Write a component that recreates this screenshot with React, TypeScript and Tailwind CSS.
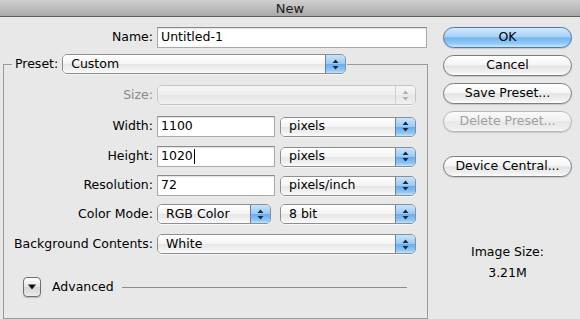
import React from "react";

const font = { fontFamily: '"DejaVu Sans", "Liberation Sans", sans-serif' };

function Arrows({ disabled }: { disabled?: boolean }) {
  const c = disabled ? "#b0b0b0" : "#1a2a40";
  return (
    <svg width="7" height="11" viewBox="0 0 7 11">
      <path d="M3.5 0.5 L6.5 4 L0.5 4 Z" fill={c} />
      <path d="M0.5 7 L6.5 7 L3.5 10.5 Z" fill={c} />
    </svg>
  );
}

function Select({
  value,
  width,
  disabled,
  className,
}: {
  value: string;
  width: string;
  disabled?: boolean;
  className?: string;
}) {
  return (
    <div
      className={`${width} h-[20px] flex rounded-[5px] border ${
        disabled ? "border-[#c4c4c4]" : "border-[#8e8e8e]"
      } overflow-hidden shadow-[0_1px_0_rgba(255,255,255,0.6)] ${className ?? ""}`}
    >
      <div
        className={`flex-1 flex items-center pl-[8px] text-[12.5px] leading-none ${
          disabled
            ? "bg-[linear-gradient(#f6f6f6,#eeeeee_50%,#e6e6e6_51%,#f0f0f0)] text-[#999]"
            : "bg-[linear-gradient(#ffffff,#f4f4f4_48%,#e6e6e6_52%,#f3f3f3_85%,#fbfbfb)] text-black"
        }`}
      >
        {value}
      </div>
      <div
        className={`w-[20px] flex items-center justify-center border-l ${
          disabled
            ? "border-[#d0d0d0] bg-[linear-gradient(#f6f6f6,#eeeeee_50%,#e6e6e6_51%,#f0f0f0)]"
            : "border-[#5d86b8] bg-[linear-gradient(#c9e3fb,#9ccaf3_48%,#6aaded_52%,#8fc6f5_85%,#c5e4fc)]"
        }`}
      >
        <Arrows disabled={disabled} />
      </div>
    </div>
  );
}

function Input({ value, width, caret }: { value: string; width: string; caret?: boolean }) {
  return (
    <div
      className={`${width} h-[21px] bg-white border border-[#a9a9a9] border-t-[#8a8a8a] shadow-[inset_0_1px_1px_rgba(0,0,0,0.12)] flex items-center pl-[3px] text-[12.5px] leading-none text-black`}
    >
      {value}
      {caret && <span className="inline-block w-[1px] h-[15px] bg-black ml-[1px]" />}
    </div>
  );
}

function Button({
  label,
  primary,
  disabled,
  className,
}: {
  label: string;
  primary?: boolean;
  disabled?: boolean;
  className?: string;
}) {
  return (
    <div
      className={`w-[129px] h-[21px] rounded-full border flex items-center justify-center text-[12.5px] leading-none ${
        primary
          ? "border-[#4f76a6] bg-[linear-gradient(#d2e9fc,#a8d2f7_45%,#74b6ef_52%,#8ec7f5_80%,#c9e8fd)] text-black"
          : disabled
          ? "border-[#b8b8b8] bg-[linear-gradient(#fafafa,#f0f0f0_48%,#e6e6e6_52%,#eeeeee_85%,#f6f6f6)] text-[#a0a0a0]"
          : "border-[#7d7d7d] bg-[linear-gradient(#ffffff,#f5f5f5_45%,#e4e4e4_52%,#f0f0f0_85%,#ffffff)] text-black"
      } shadow-[0_1px_1px_rgba(0,0,0,0.15)] ${className ?? ""}`}
    >
      {label}
    </div>
  );
}

function Row({
  label,
  children,
  className,
  muted,
}: {
  label: string;
  children: React.ReactNode;
  className?: string;
  muted?: boolean;
}) {
  return (
    <div className={`flex items-center ${className ?? ""}`}>
      <div
        className={`w-[149px] text-right pr-0 text-[12.5px] leading-none ${
          muted ? "text-[#8a8a8a]" : "text-black"
        }`}
      >
        {label}
      </div>
      <div className="ml-[4px] flex items-center gap-[5px]">{children}</div>
    </div>
  );
}

export default function App() {
  return (
    <div
      className="w-[580px] h-[319px] bg-[#e8e8e8] overflow-hidden flex flex-col"
      style={font}
    >
      <div className="h-[17px] shrink-0 bg-[linear-gradient(#d0d0d0,#a9a9a9)] border-b border-[#5e5e5e] flex items-center justify-center text-[13px] leading-none text-[#1a1a1a]">
        New
      </div>
      <div className="flex">
        <div className="w-[428px]">
          <div className="flex items-center mt-[10px]">
            <div className="w-[153px] text-right text-[12.5px] leading-none text-black">Name:</div>
            <div className="ml-[4px]">
              <Input value="Untitled-1" width="w-[270px]" />
            </div>
          </div>
          <fieldset className="ml-[3px] mt-[6px] w-[425px] border border-[#9a9a9a] pl-[8px] pb-[21px]">
            <legend className="flex items-center pl-[3px] pr-[1px]">
              <span className="text-[12.5px] leading-none text-black mr-[4px]">Preset:</span>
              <Select value="Custom" width="w-[284px]" />
            </legend>
            <div className="-ml-[8px]">
              <Row label="Size:" muted className="mt-[11px]">
                <Select value="" width="w-[259px]" disabled />
              </Row>
              <Row label="Width:" className="mt-[11px]">
                <Input value="1100" width="w-[118px]" />
                <Select value="pixels" width="w-[136px]" />
              </Row>
              <Row label="Height:" className="mt-[9px]">
                <Input value="1020" width="w-[118px]" caret />
                <Select value="pixels" width="w-[136px]" />
              </Row>
              <Row label="Resolution:" className="mt-[8px]">
                <Input value="72" width="w-[118px]" />
                <Select value="pixels/inch" width="w-[136px]" />
              </Row>
              <Row label="Color Mode:" className="mt-[8px]">
                <Select value="RGB Color" width="w-[114px]" />
                <Select value="8 bit" width="w-[136px]" className="ml-[4px]" />
              </Row>
              <Row label="Background Contents:" className="mt-[10px]">
                <Select value="White" width="w-[259px]" />
              </Row>
              <div className="flex items-center mt-[23px] ml-[19px] mr-[20px]">
                <div className="w-[18px] h-[20px] rounded-[4px] border border-[#6f6f6f] bg-[linear-gradient(#fdfdfd,#e6e6e6_50%,#d4d4d4_52%,#ececec)] flex items-center justify-center shadow-[0_1px_1px_rgba(0,0,0,0.2)]">
                  <svg width="8" height="6" viewBox="0 0 8 6">
                    <path d="M0 0.5 L8 0.5 L4 5.5 Z" fill="#111" />
                  </svg>
                </div>
                <span className="ml-[11px] text-[12.5px] leading-none text-black">Advanced</span>
                <div className="flex-1 ml-[8px] h-px bg-[#8c8c8c]" />
              </div>
            </div>
          </fieldset>
        </div>
        <div className="pl-[15px] flex flex-col">
          <Button label="OK" primary className="mt-[10px]" />
          <Button label="Cancel" className="mt-[7px]" />
          <Button label="Save Preset..." className="mt-[7px]" />
          <Button label="Delete Preset..." disabled className="mt-[7px]" />
          <Button label="Device Central..." className="mt-[24px]" />
          <div className="mt-[69px] w-[129px] text-center text-[12.5px] leading-none text-black">
            Image Size:
          </div>
          <div className="mt-[8px] w-[129px] text-center text-[12.5px] leading-none text-black">
            3.21M
          </div>
        </div>
      </div>
    </div>
  );
}
